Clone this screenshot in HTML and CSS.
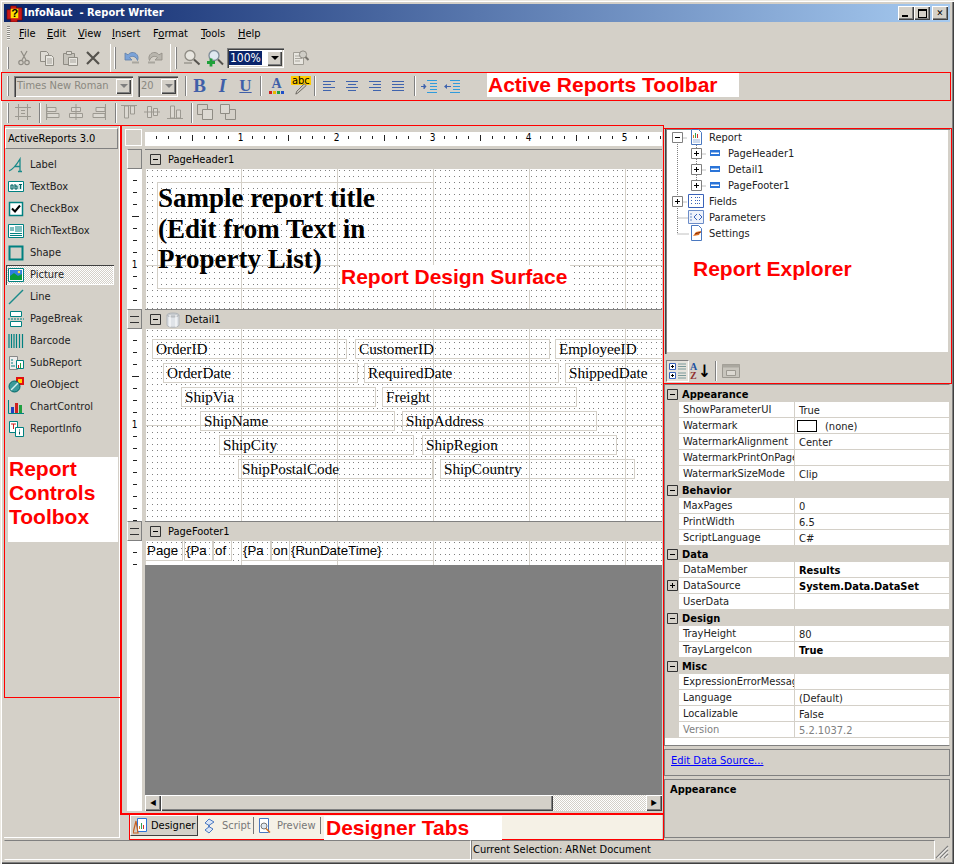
FILE: index.html
```html
<!DOCTYPE html>
<html lang="en">
<head>
<meta charset="utf-8">
<title>InfoNaut - Report Writer</title>
<link rel="stylesheet" href="styles.css">
</head>
<body>
<svg class="defs" xmlns="http://www.w3.org/2000/svg">
  <symbol id="i-cut" viewBox="0 0 16 16"><path d="M5 1l5 9M11 1l-5 9" fill="none" stroke="#8f8c84" stroke-width="1.2"/><circle cx="5" cy="12.5" r="2.2" fill="none" stroke="#8f8c84" stroke-width="1.2"/><circle cx="11" cy="12.5" r="2.2" fill="none" stroke="#8f8c84" stroke-width="1.2"/></symbol>
  <symbol id="i-copy" viewBox="0 0 16 16"><path d="M1.500 1.500h6l2 2v8h-8z" fill="#dedbd4" stroke="#8f8c84"/><path d="M6.500 5.500h6l2 2v8h-8z" fill="#e8e6e0" stroke="#8f8c84"/><path d="M8 9h5M8 11h5M8 13h5" stroke="#a8a59e"/></symbol>
  <symbol id="i-paste" viewBox="0 0 16 16"><path d="M1.500 3.500h11v11h-11z" fill="#c6c3bb" stroke="#8f8c84"/><path d="M4.500 1.500h5v3h-5z" fill="#dedbd4" stroke="#8f8c84"/><path d="M6.500 7.500h9v8h-9z" fill="#e8e6e0" stroke="#8f8c84"/><path d="M8 10h6M8 12h6" stroke="#a8a59e"/></symbol>
  <symbol id="i-del" viewBox="0 0 16 16"><path d="M2 2l12 12M14 2L2 14" stroke="#55534e" stroke-width="2.200" fill="none"/></symbol>
  <symbol id="i-undo" viewBox="0 0 16 16"><path d="M1 3v7h7L5.500 7.500C8 5.500 12 6 13.500 10.500 15.500 6 12 2 8 2.500 6.500 2.700 5 3.500 4 4.800z" fill="#7aa2d8" stroke="#5f7fa8" stroke-width=".8"/><path d="M8 12.500h7" stroke="#a9a69e" stroke-width="2"/></symbol>
  <symbol id="i-redo" viewBox="0 0 16 16"><path d="M15 3v7H8l2.500-2.500C8 5.500 4 6 2.500 10.500 .5 6 4 2 8 2.500c1.500.2 3 1 4 2.300z" fill="#b8b5ad" stroke="#8f8c84" stroke-width=".8"/><path d="M1 12.500h7" stroke="#a9a69e" stroke-width="2"/></symbol>
  <symbol id="i-zoom" viewBox="0 0 18 18"><circle cx="7" cy="6.500" r="5" fill="#e8e6e0" stroke="#8f8c84" stroke-width="1.300"/><path d="M11 10.500l5.500 5" stroke="#55534e" stroke-width="2"/><path d="M1 14h8" stroke="#a9a69e" stroke-width="2"/></symbol>
  <symbol id="i-zoomp" viewBox="0 0 18 18"><circle cx="8" cy="6.500" r="5" fill="#dfe8f0" stroke="#7e8c98" stroke-width="1.300"/><path d="M12 10.500l5 5" stroke="#55534e" stroke-width="2"/><path d="M5 9.500v8M1 13.500h8" stroke="#1fa03a" stroke-width="2.800"/></symbol>
  <symbol id="i-prop" viewBox="0 0 18 18"><path d="M1.500 3.500h10v12h-10z" fill="#e8e6e0" stroke="#a09d95"/><path d="M3 7h7M3 9.500h7M3 12h5" stroke="#a9a69e"/><circle cx="11" cy="5.500" r="3.600" fill="#cfcdc6" stroke="#8f8c84"/><path d="M13.500 8l3 3" stroke="#77746e" stroke-width="2"/></symbol>
  <symbol id="i-al" viewBox="0 0 14 12"><path d="M1 1.500h12M1 4.500h8M1 7.500h12M1 10.500h8" stroke="#3f63ad"/></symbol>
  <symbol id="i-ac" viewBox="0 0 14 12"><path d="M1 1.500h12M3 4.500h8M1 7.500h12M3 10.500h8" stroke="#3f63ad"/></symbol>
  <symbol id="i-ar" viewBox="0 0 14 12"><path d="M1 1.500h12M5 4.500h8M1 7.500h12M5 10.500h8" stroke="#3f63ad"/></symbol>
  <symbol id="i-aj" viewBox="0 0 14 12"><path d="M1 1.500h12M1 4.500h12M1 7.500h12M1 10.500h12" stroke="#3f63ad"/></symbol>
  <symbol id="i-ind" viewBox="0 0 16 14"><path d="M6 1.500h10M9 4.500h7M9 7.500h7M9 10.500h7M6 13.500h10" stroke="#2f9bdc"/><path d="M0 7.500h4M3 5v5" stroke="#3f63ad"/><path d="M5.500 7.500L3 5v5z" fill="#3f63ad"/></symbol>
  <symbol id="i-out" viewBox="0 0 16 14"><path d="M6 1.500h10M9 4.500h7M9 7.500h7M9 10.500h7M6 13.500h10" stroke="#2f9bdc"/><path d="M3 7.500h4" stroke="#3f63ad"/><path d="M0 7.500L3 5v5z" fill="#3f63ad"/></symbol>
  <symbol id="i-pen" viewBox="0 0 16 16"><path d="M5 14l-2 1 1-3 8-8 2 2z" fill="#c8c4bb" stroke="#55534e" stroke-width=".8"/></symbol>
  <symbol id="g-snap" viewBox="0 0 16 16"><path d="M3.500 0v16M12.500 0v16M0 3.500h16M0 12.500h16M6 6.500h4M6 9.500h4" stroke="#9c9991" fill="none"/></symbol>
  <symbol id="g-l" viewBox="0 0 16 16"><path d="M1.500 0v16M2 3.500h9v4H2zM2 9.500h12v4H2z" stroke="#9c9991" fill="#dcd9d2"/></symbol>
  <symbol id="g-c" viewBox="0 0 16 16"><path d="M8 0v16M3.500 3.500h9v4h-9zM1.500 9.500h13v4h-13z" stroke="#9c9991" fill="#dcd9d2"/></symbol>
  <symbol id="g-r" viewBox="0 0 16 16"><path d="M14.500 0v16M5 3.500h9v4H5zM2 9.500h12v4H2z" stroke="#9c9991" fill="#dcd9d2"/></symbol>
  <symbol id="g-t" viewBox="0 0 16 16"><path d="M0 1.500h16M3.500 2h4v12h-4zM9.500 2h4v8h-4z" stroke="#9c9991" fill="#dcd9d2"/></symbol>
  <symbol id="g-m" viewBox="0 0 16 16"><path d="M0 8h16M3.500 2.500h4v11h-4zM9.500 4.500h4v7h-4z" stroke="#9c9991" fill="#dcd9d2"/></symbol>
  <symbol id="g-b" viewBox="0 0 16 16"><path d="M0 14.500h16M3.500 2h4v12h-4zM9.500 6h4v8h-4z" stroke="#9c9991" fill="#dcd9d2"/></symbol>
  <symbol id="g-fr" viewBox="0 0 16 16"><path d="M.5.500h10v10H.500z" fill="none" stroke="#8f8c84"/><path d="M5.500 5.500h10v10h-10z" fill="#dcd9d2" stroke="#8f8c84"/></symbol>
  <symbol id="g-bk" viewBox="0 0 16 16"><path d="M5.500 5.500h10v10h-10z" fill="none" stroke="#8f8c84"/><path d="M.5.500h9v9h-9z" fill="#dcd9d2" stroke="#8f8c84"/></symbol>
  <symbol id="t-label" viewBox="0 0 16 16"><path d="M1 14c5-2 8-7 11-12v12M6.500 9.500h5.500M10 14.500h4" fill="none" stroke="#1a8a8a" stroke-width="1.300"/></symbol>
  <symbol id="t-text" viewBox="0 0 16 16"><path d="M.5 2.500h15v10H.5z" fill="#fff" stroke="#008080"/><path d="M2 5.500h12v5H2z" fill="#008080" opacity=".25"/><path d="M3 6h2v4H3zM7 5v5h2V7H7M11 5.500h3M12.500 5.500V10" fill="none" stroke="#006060"/></symbol>
  <symbol id="t-check" viewBox="0 0 16 16"><path d="M1.500 1.500h13v13h-13z" fill="#fff" stroke="#008080" stroke-width="1.500"/><path d="M4 7.500l3 3 5-6" fill="none" stroke="#000" stroke-width="2"/></symbol>
  <symbol id="t-rich" viewBox="0 0 16 16"><path d="M.5 1.500h15v13H.5z" fill="#fff" stroke="#008080"/><path d="M2 4h4v4H2z" fill="#7fbfbf"/><path d="M7 4h7M7 6h7M7 8h7M2 10.500h12M2 12.500h12" stroke="#008080"/></symbol>
  <symbol id="t-shape" viewBox="0 0 16 16"><path d="M1.500 1.500h13v13h-13z" fill="#d4d0c8" stroke="#008080" stroke-width="2"/></symbol>
  <symbol id="t-pic" viewBox="0 0 16 16"><path d="M.5 1.500h15v13H.5z" fill="#fff" stroke="#008080"/><path d="M2 3h12v6H2z" fill="#2f7fe0"/><path d="M2 9l4-3 4 3 4-2v6H2z" fill="#0a9a3a"/><circle cx="11" cy="5" r="1.300" fill="#ffe040"/></symbol>
  <symbol id="t-line" viewBox="0 0 16 16"><path d="M1 15L15 1" stroke="#1a8a8a" stroke-width="1.500"/></symbol>
  <symbol id="t-break" viewBox="0 0 16 16"><path d="M2.500.5h11v5h-11zM2.500 10.500h11v5h-11z" fill="#fff" stroke="#008080"/><path d="M0 8h16" stroke="#008080" stroke-dasharray="2 1"/></symbol>
  <symbol id="t-bar" viewBox="0 0 16 16"><path d="M1 1v14M3.500 1v14M6 1v14M8.500 1v14M11.500 1v14M14.500 1v14" stroke="#008080" stroke-width="1.200"/></symbol>
  <symbol id="t-sub" viewBox="0 0 16 16"><path d="M1.500 1.500h8v13h-8z" fill="#eee" stroke="#888"/><path d="M3 5h2M3 8h2M3 11h4" stroke="#008080"/><path d="M8.500 5.500h7v8h-7z" fill="#fff" stroke="#008080"/><path d="M10 10h1v3h-1z" fill="#d02020"/><path d="M12 8h1v5h-1z" fill="#20a040"/></symbol>
  <symbol id="t-ole" viewBox="0 0 16 16"><path d="M8 0h8v8H8z" fill="#e01010"/><path d="M10 2h4v4h-4z" fill="#ffd400"/><circle cx="6.500" cy="9.500" r="5.500" fill="#3a9a9a" stroke="#006666"/><path d="M3 13l7-7" stroke="#d4f0f0" stroke-width="1.500"/></symbol>
  <symbol id="t-chart" viewBox="0 0 16 16"><path d="M.5 1v13.500H16" fill="none" stroke="#008080"/><path d="M3 8h3v6H3z" fill="#2040c0"/><path d="M7 4h3v10H7z" fill="#d02020"/><path d="M11 6h3v8h-3z" fill="#20a040"/></symbol>
  <symbol id="t-info" viewBox="0 0 16 16"><path d="M1.500.5h8v11h-8z" fill="#fff" stroke="#008080"/><path d="M3 3h5M5.500 3v5" stroke="#d02020"/><path d="M7.500 6.500h8v9h-8z" fill="#fff" stroke="#008080"/><path d="M11.500 8.500v1M11.500 10.500v3" stroke="#006060"/></symbol>
  <symbol id="x-minus" viewBox="0 0 11 11"><path d="M.5.500h10v10H.500z" fill="#fff" stroke="#808080"/><path d="M3 5.500h5" stroke="#000"/></symbol>
  <symbol id="x-plus" viewBox="0 0 11 11"><path d="M.5.500h10v10H.500z" fill="#fff" stroke="#808080"/><path d="M3 5.500h5M5.500 3v5" stroke="#000"/></symbol>
  <symbol id="x-gminus" viewBox="0 0 11 11"><path d="M.5.500h10v10H.500z" fill="none" stroke="#333"/><path d="M3 5.500h5" stroke="#000"/></symbol>
  <symbol id="x-gplus" viewBox="0 0 11 11"><path d="M.5.500h10v10H.500z" fill="none" stroke="#333"/><path d="M3 5.500h5M5.500 3v5" stroke="#000"/></symbol>
  <symbol id="e-report" viewBox="0 0 16 16"><path d="M3.500.5h7l3 3v12h-10z" fill="#fff" stroke="#4a78c0"/><path d="M5 6h1v3H5z" fill="#e08020"/><path d="M7 4h1v5H7z" fill="#30a050"/><path d="M9 5h1v4H9z" fill="#d03030"/><path d="M5 11h7M5 13h7" stroke="#9ab4dc"/></symbol>
  <symbol id="e-band" viewBox="0 0 16 16"><path d="M3 5h10v6H3z" fill="#2a74d8"/><path d="M4 7.500h8v1.500H4z" fill="#fff"/></symbol>
  <symbol id="e-fields" viewBox="0 0 16 16"><path d="M.5 1.500h15v13H.5z" fill="#fff" stroke="#3a62b8"/><path d="M3 4.500h2M7 4.500h6M3 7.500h2M7 7.500h6M3 10.500h2M7 10.500h6" stroke="#3a62b8" stroke-dasharray="1 1"/></symbol>
  <symbol id="e-param" viewBox="0 0 16 16"><path d="M.5 1.500h15v13H.5z" fill="#eef2fa" stroke="#6b8cc8"/><path d="M3 4v8" stroke="#6b8cc8" stroke-dasharray="2 1"/><path d="M9 5l-3 3 3 3M11 5l3 3-3 3" fill="none" stroke="#3a62b8"/></symbol>
  <symbol id="e-set" viewBox="0 0 16 16"><path d="M3.500.5h7l3 3v12h-10z" fill="#fff" stroke="#4a78c0"/><path d="M5 11l3-4 5-1-2 4z" fill="#e07020"/><path d="M7 9l6-2" stroke="#803010"/></symbol>
  <symbol id="p-cat" viewBox="0 0 18 18"><path d="M.5 1.500h6v6h-6zM.5 10.500h6v6h-6z" fill="#fff" stroke="#3a62b8"/><path d="M2 4.500h3M3.500 3v3M2 13.500h3M3.500 12v3" stroke="#000"/><path d="M9 2h8M9 4.500h8M9 7h8M9 11h8M9 13.500h8M9 16h8" stroke="#7a9a9a"/></symbol>
  <symbol id="p-pages" viewBox="0 0 18 18"><path d="M.5 2.500h17v13H.5z" fill="#c8c5bd" stroke="#9c9991"/><path d="M.5 2.500h17v3H.5z" fill="#aaa79f"/><path d="M4.500 8.500h9v5h-9z" fill="#dcd9d2" stroke="#9c9991"/></symbol>
  <symbol id="d-db" viewBox="0 0 14 16"><path d="M1 3v10c0 3 12 3 12 0V3" fill="#dfe3e8" stroke="#b0b4b8"/><ellipse cx="7" cy="3" rx="6" ry="2" fill="#c8ccd0" stroke="#b0b4b8"/><path d="M4 3v12M10 3v12" stroke="#fff"/></symbol>
  <symbol id="d-des" viewBox="0 0 16 16"><path d="M4.500.5h9v13h-9z" fill="#fff" stroke="#2a74d8"/><path d="M6 8h1v3H6z" fill="#e08020"/><path d="M8 5h1v6H8z" fill="#30a050"/><path d="M10 7h1v4h-1z" fill="#d03030"/><path d="M3 3L0 15h5z" fill="none" stroke="#c86020" stroke-width="1.200"/></symbol>
  <symbol id="d-scr" viewBox="0 0 16 16"><path d="M7 1l5 3-6 4 5 3-4 4-4-3 5-4-5-3z" fill="#dbe6f6" stroke="#4a78c0"/></symbol>
  <symbol id="d-pre" viewBox="0 0 16 16"><path d="M2.500.5h9v14h-9z" fill="#fff" stroke="#4a78c0"/><circle cx="7" cy="8" r="3" fill="#dfe8f0" stroke="#777"/><path d="M9 10.500l4 4" stroke="#d07020" stroke-width="1.500"/></symbol>
  <symbol id="w-grip" viewBox="0 0 14 14"><path d="M13 1L1 13M13 5l-8 8M13 9l-4 4" stroke="#808080" stroke-width="1.200"/><path d="M13 2.500L2.500 13M13 6.500L6.500 13M13 10.500L10.500 13" stroke="#fff"/></symbol>
</svg>

<div class="window">
  <header class="titlebar">
    <svg class="appicon" viewBox="0 0 18 18"><path d="M1 5h4V1h6v2h6v13h-5v2H5v-3H1z" fill="#c81818" stroke="#600" stroke-width=".6"/><path d="M5 4h8v10H5z" fill="#ffe000"/><text x="5.500" y="13" class="appq">?</text></svg>
    <span class="title-text">InfoNaut&nbsp; - Report Writer</span>
    <span class="winbtns">
      <span class="winbtn"><span class="w-min"></span></span>
      <span class="winbtn"><span class="w-max"></span></span>
      <span class="winbtn w-close">✕</span>
    </span>
  </header>

  <nav class="menubar">
    <span class="grip"></span>
    <span class="mi mi-file"><u>F</u>ile</span>
    <span class="mi mi-edit"><u>E</u>dit</span>
    <span class="mi mi-view"><u>V</u>iew</span>
    <span class="mi mi-insert"><u>I</u>nsert</span>
    <span class="mi mi-format">F<u>o</u>rmat</span>
    <span class="mi mi-tools"><u>T</u>ools</span>
    <span class="mi mi-help"><u>H</u>elp</span>
  </nav>

  <div class="tb tb1">
    <div class="tbgroup g1">
      <span class="grip"></span>
      <span class="btn"><svg class="ic"><use href="#i-cut"/></svg></span>
      <span class="btn"><svg class="ic"><use href="#i-copy"/></svg></span>
      <span class="btn"><svg class="ic"><use href="#i-paste"/></svg></span>
      <span class="btn"><svg class="ic"><use href="#i-del"/></svg></span>
    </div>
    <div class="tbgroup g2">
      <span class="grip"></span>
      <span class="btn"><svg class="ic"><use href="#i-undo"/></svg></span>
      <span class="btn"><svg class="ic"><use href="#i-redo"/></svg></span>
    </div>
    <div class="tbgroup g3">
      <span class="grip"></span>
      <span class="btn"><svg class="ic ic18"><use href="#i-zoom"/></svg></span>
      <span class="btn"><svg class="ic ic18"><use href="#i-zoomp"/></svg></span>
      <span class="combo zoomcombo"><span class="sel">100%</span><span class="drop"><i></i></span></span>
      <span class="btn btn-prop"><svg class="ic ic18"><use href="#i-prop"/></svg></span>
    </div>
  </div>

  <div class="tb tb2">
    <span class="grip"></span>
    <span class="combo fontcombo dis"><span class="ctext">Times New Roman</span><span class="drop"><i></i></span></span>
    <span class="combo sizecombo dis"><span class="ctext">20</span><span class="drop"><i></i></span></span>
    <span class="sep s-a"></span>
    <span class="btn t-b">B</span>
    <span class="btn t-i">I</span>
    <span class="btn t-u">U</span>
    <span class="sep s-b"></span>
    <span class="btn colA"><span class="a-letter">A</span><span class="a-sw"><i></i><i></i><i></i><i></i></span></span>
    <span class="btn colH"><span class="abc">abc</span><svg class="pen"><use href="#i-pen"/></svg></span>
    <span class="sep"></span>
    <span class="btn"><svg class="ic14"><use href="#i-al"/></svg></span>
    <span class="btn"><svg class="ic14"><use href="#i-ac"/></svg></span>
    <span class="btn"><svg class="ic14"><use href="#i-ar"/></svg></span>
    <span class="btn"><svg class="ic14"><use href="#i-aj"/></svg></span>
    <span class="sep s-i"></span>
    <span class="btn"><svg class="ic ind"><use href="#i-ind"/></svg></span>
    <span class="btn"><svg class="ic ind"><use href="#i-out"/></svg></span>
  </div>

  <div class="tb tb3">
    <span class="grip"></span>
    <span class="btn"><svg class="ic"><use href="#g-snap"/></svg></span>
    <span class="sep"></span>
    <span class="btn"><svg class="ic"><use href="#g-l"/></svg></span>
    <span class="btn"><svg class="ic"><use href="#g-c"/></svg></span>
    <span class="btn"><svg class="ic"><use href="#g-r"/></svg></span>
    <span class="sep"></span>
    <span class="btn"><svg class="ic"><use href="#g-t"/></svg></span>
    <span class="btn"><svg class="ic"><use href="#g-m"/></svg></span>
    <span class="btn"><svg class="ic"><use href="#g-b"/></svg></span>
    <span class="sep"></span>
    <span class="btn"><svg class="ic"><use href="#g-fr"/></svg></span>
    <span class="btn"><svg class="ic"><use href="#g-bk"/></svg></span>
  </div>

  <main class="main">
    <aside class="toolbox">
      <div class="tbx-head">ActiveReports 3.0</div>
      <div class="tbx-item"><svg class="ic"><use href="#t-label"/></svg>Label</div>
      <div class="tbx-item"><svg class="ic"><use href="#t-text"/></svg>TextBox</div>
      <div class="tbx-item"><svg class="ic"><use href="#t-check"/></svg>CheckBox</div>
      <div class="tbx-item"><svg class="ic"><use href="#t-rich"/></svg>RichTextBox</div>
      <div class="tbx-item"><svg class="ic"><use href="#t-shape"/></svg>Shape</div>
      <div class="tbx-item active"><svg class="ic"><use href="#t-pic"/></svg>Picture</div>
      <div class="tbx-item"><svg class="ic"><use href="#t-line"/></svg>Line</div>
      <div class="tbx-item"><svg class="ic"><use href="#t-break"/></svg>PageBreak</div>
      <div class="tbx-item"><svg class="ic"><use href="#t-bar"/></svg>Barcode</div>
      <div class="tbx-item"><svg class="ic"><use href="#t-sub"/></svg>SubReport</div>
      <div class="tbx-item"><svg class="ic"><use href="#t-ole"/></svg>OleObject</div>
      <div class="tbx-item"><svg class="ic"><use href="#t-chart"/></svg>ChartControl</div>
      <div class="tbx-item"><svg class="ic"><use href="#t-info"/></svg>ReportInfo</div>
    </aside>

    <section class="designer">
      <div class="surface">
        <div class="rulerrow">
          <span class="corner"></span>
          <div class="hruler">
            <span class="hcell"><b>1</b></span><span class="hcell"><b>2</b></span><span class="hcell"><b>3</b></span><span class="hcell"><b>4</b></span><span class="hcell"><b>5</b></span><span class="hcell"></span>
          </div>
        </div>

        <div class="section">
          <div class="vr"><span class="handle"></span><div class="vticks h140"><b>1</b></div></div>
          <div class="secmain">
            <div class="band"><svg class="ex"><use href="#x-gminus"/></svg><span class="bandname">PageHeader1</span></div>
            <div class="body h140">
              <div class="field titlebox">Sample report title<br>(Edit from Text in<br>Property List)</div>
            </div>
          </div>
        </div>

        <div class="section">
          <div class="vr"><span class="handle eq"></span><div class="vticks h192"><b>1</b></div></div>
          <div class="secmain">
            <div class="band"><svg class="ex"><use href="#x-gminus"/></svg><svg class="bandicon"><use href="#d-db"/></svg><span>Detail1</span></div>
            <div class="body h192">
              <div class="field f r1 c1">OrderID</div>
              <div class="field f r1 c2">CustomerID</div>
              <div class="field f r1 c3">EmployeeID</div>
              <div class="field f r2 c4">OrderDate</div>
              <div class="field f r2 c5">RequiredDate</div>
              <div class="field f r2 c6">ShippedDate</div>
              <div class="field f r3 c7">ShipVia</div>
              <div class="field f r3 c8">Freight</div>
              <div class="field f r4 c9">ShipName</div>
              <div class="field f r4 c10">ShipAddress</div>
              <div class="field f r5 c11">ShipCity</div>
              <div class="field f r5 c12">ShipRegion</div>
              <div class="field f r6 c13">ShipPostalCode</div>
              <div class="field f r6 c14">ShipCountry</div>
            </div>
          </div>
        </div>

        <div class="section">
          <div class="vr"><span class="handle eq"></span><div class="vticks h24"></div></div>
          <div class="secmain">
            <div class="band"><svg class="ex"><use href="#x-gminus"/></svg><span class="bandname">PageFooter1</span></div>
            <div class="body h24">
              <div class="field ff p1">Page</div>
              <div class="field ff p2">{Pa</div>
              <div class="field ff p3">of</div>
              <div class="field ff p4">{Pa</div>
              <div class="field ff p5">on</div>
              <div class="field ff p6">{RunDateTime}</div>
            </div>
          </div>
        </div>

        <div class="section">
          <div class="vr vrblank"></div>
          <div class="secmain">
            <div class="empty"></div>
            <div class="hscroll">
              <span class="sbtn">◀</span>
              <span class="thumb"></span>
              <span class="track"></span>
              <span class="sbtn">▶</span>
            </div>
          </div>
        </div>
      </div>

      <div class="tabs">
        <span class="tab on"><svg class="ic"><use href="#d-des"/></svg>Designer</span>
        <span class="tab"><svg class="ic"><use href="#d-scr"/></svg>Script</span>
        <span class="tab"><svg class="ic"><use href="#d-pre"/></svg>Preview</span>
      </div>
    </section>

    <aside class="right">
      <div class="explorer">
        <div class="tree">
          <svg class="treelines" viewBox="0 0 100 110"><path d="M12.500 9v96M12.500 9h10M12.500 73h10M12.500 89h11M12.500 105h11M31.500 14v43M31.500 25h10M31.500 41h10M31.500 57h10" fill="none" stroke="#808080" stroke-dasharray="1 1"/></svg>
          <div class="node n0"><svg class="exp"><use href="#x-minus"/></svg><svg class="ic nic"><use href="#e-report"/></svg>Report</div>
          <div class="node n1"><svg class="exp"><use href="#x-plus"/></svg><svg class="ic nic"><use href="#e-band"/></svg>PageHeader1</div>
          <div class="node n1"><svg class="exp"><use href="#x-plus"/></svg><svg class="ic nic"><use href="#e-band"/></svg>Detail1</div>
          <div class="node n1"><svg class="exp"><use href="#x-plus"/></svg><svg class="ic nic"><use href="#e-band"/></svg>PageFooter1</div>
          <div class="node n0"><svg class="exp"><use href="#x-plus"/></svg><svg class="ic nic"><use href="#e-fields"/></svg>Fields</div>
          <div class="node n0"><span class="exp"></span><svg class="ic nic"><use href="#e-param"/></svg>Parameters</div>
          <div class="node n0"><span class="exp"></span><svg class="ic nic"><use href="#e-set"/></svg>Settings</div>
        </div>
      </div>
      <div class="ptools">
        <span class="pbtn on"><svg class="ic ic18"><use href="#p-cat"/></svg></span>
        <span class="pbtn az"><span class="az-t"><em>A</em><em>Z</em></span><span class="az-arrow">↓</span></span>
        <span class="sep"></span>
        <span class="pbtn"><svg class="ic ic18"><use href="#p-pages"/></svg></span>
      </div>
      <div class="props">
        <div class="rows">
          <div class="cat"><svg class="cx"><use href="#x-gminus"/></svg>Appearance</div>
          <div class="row"><span class="nm">ShowParameterUI</span><span class="vl">True</span></div>
          <div class="row"><span class="nm">Watermark</span><span class="vl"><span class="swatch"></span>(none)</span></div>
          <div class="row"><span class="nm">WatermarkAlignment</span><span class="vl">Center</span></div>
          <div class="row"><span class="nm">WatermarkPrintOnPage</span><span class="vl"></span></div>
          <div class="row"><span class="nm">WatermarkSizeMode</span><span class="vl">Clip</span></div>
          <div class="cat"><svg class="cx"><use href="#x-gminus"/></svg>Behavior</div>
          <div class="row"><span class="nm">MaxPages</span><span class="vl">0</span></div>
          <div class="row"><span class="nm">PrintWidth</span><span class="vl">6.5</span></div>
          <div class="row"><span class="nm">ScriptLanguage</span><span class="vl">C#</span></div>
          <div class="cat"><svg class="cx"><use href="#x-gminus"/></svg>Data</div>
          <div class="row"><span class="nm">DataMember</span><span class="vl strong">Results</span></div>
          <div class="row"><span class="gx"><svg class="cx"><use href="#x-gplus"/></svg></span><span class="nm">DataSource</span><span class="vl strong">System.Data.DataSet</span></div>
          <div class="row"><span class="nm">UserData</span><span class="vl"></span></div>
          <div class="cat"><svg class="cx"><use href="#x-gminus"/></svg>Design</div>
          <div class="row"><span class="nm">TrayHeight</span><span class="vl">80</span></div>
          <div class="row"><span class="nm">TrayLargeIcon</span><span class="vl strong">True</span></div>
          <div class="cat"><svg class="cx"><use href="#x-gminus"/></svg>Misc</div>
          <div class="row"><span class="nm">ExpressionErrorMessag</span><span class="vl"></span></div>
          <div class="row"><span class="nm">Language</span><span class="vl">(Default)</span></div>
          <div class="row"><span class="nm">Localizable</span><span class="vl">False</span></div>
          <div class="row ro"><span class="nm">Version</span><span class="vl">5.2.1037.2</span></div>
        </div>
      </div>
      <div class="cmd"><a class="cmdlink" href="#">Edit Data Source...</a></div>
      <div class="desc">Appearance</div>
    </aside>
  </main>

  <footer class="status">
    <span class="st st1"></span>
    <span class="st st2">Current Selection: ARNet Document</span>
    <svg class="stgrip"><use href="#w-grip"/></svg>
  </footer>

  <div class="box box-toolbar"></div>
  <div class="box box-toolbox"></div>
  <div class="box box-designer"></div>
  <div class="box box-explorer"></div>
  <div class="box box-tabs"></div>
  <div class="anno a-toolbar">Active Reports Toolbar</div>
  <div class="anno a-surface">Report Design Surface</div>
  <div class="anno a-explorer">Report Explorer</div>
  <div class="anno a-toolbox">Report<br>Controls<br>Toolbox</div>
  <div class="anno a-tabs">Designer Tabs</div>
</div>
</body>
</html>
```
FILE: styles.css
```css
* { box-sizing: border-box; }
html, body { margin: 0; padding: 0; background: #d4d0c8; }
body { font: 11px/16px "DejaVu Sans Condensed", "Liberation Sans", Arial, sans-serif; color: #000; }
.defs { position: absolute; width: 0; height: 0; overflow: hidden; }
svg { display: block; flex: none; }

.window {
  position: relative; width: 954px; height: 864px; padding: 4px; overflow: hidden;
  background: #d4d0c8;
  box-shadow: inset 1px 1px 0 #ece9e2, inset 2px 2px 0 #fff, inset -1px -1px 0 #404040, inset -2px -2px 0 #808080;
}

/* title bar */
.titlebar {
  height: 18px; display: flex; align-items: center; padding-left: 2px;
  background: linear-gradient(to right, #0a246a 0%, #a6caf0 100%);
  color: #fff;
}
.appicon { width: 17px; height: 17px; }
.appq { font: bold 12px "Liberation Sans", sans-serif; fill: #000; }
.title-text { margin-left: 1px; font-weight: bold; font-size: 11px; white-space: pre; }
.winbtns { margin-left: auto; display: flex; margin-right: 2px; }
.winbtn {
  width: 16px; height: 14px; background: #d4d0c8; position: relative; display: flex; align-items: center; justify-content: center;
  box-shadow: inset 1px 1px 0 #fff, inset -1px -1px 0 #404040, inset -2px -2px 0 #808080;
  color: #000; font-size: 9px; font-weight: bold; line-height: 14px;
}
.w-close { margin-left: 2px; }
.w-min { width: 6px; height: 2px; background: #000; margin-top: 6px; margin-right: 2px; }
.w-max { width: 9px; height: 9px; border: 1px solid #000; border-top-width: 2px; }

/* menu */
.menubar { height: 22px; display: flex; align-items: center; position: relative; padding-left: 3px; }
.grip { width: 3px; height: 14px; flex: none; background: repeating-linear-gradient(#8c8a84 0 1px, #f4f2ee 1px 2px); }
.mi { position: absolute; top: 4px; }
.mi-file { left: 15px; } .mi-edit { left: 43px; } .mi-view { left: 74px; } .mi-insert { left: 108px; }
.mi-format { left: 149px; } .mi-tools { left: 197px; } .mi-help { left: 234px; }

/* toolbars */
.tb { display: flex; align-items: center; }
.tb1 { height: 28px; }
.tb2 { height: 28px; padding-left: 3px; }
.tb3 { height: 25px; padding-left: 3px; }
.tbgroup { display: flex; align-items: center; height: 100%; padding-left: 3px; }
.tbgroup .grip { height: 22px; width: 2px; background: none; border-left: 1px solid #fff; border-right: 1px solid #808080; margin-right: 2px; }
.tb2 > .grip, .tb3 > .grip { height: 20px; width: 2px; background: none; border-left: 1px solid #fff; border-right: 1px solid #808080; }
.g1 { width: 107px; border-right: 1px solid #fff; }
.g1 .grip { margin-right: 3px; }
.g2 { width: 60px; border-right: 1px solid #fff; }
.g2 .grip { margin-right: 4px; }
.g3 { padding-left: 4px; }
.g3 .grip { margin-right: 3px; }
.btn { width: 23px; height: 22px; flex: none; display: flex; align-items: center; justify-content: center; position: relative; }
.btn-prop { margin-left: 5px; }
.ic { width: 16px; height: 16px; }
.ic18 { width: 18px; height: 18px; }
.ic14 { width: 14px; height: 12px; }
.ind { width: 16px; height: 14px; }
.tb3 > .grip + .btn { margin-left: 2px; }
.tb2 > .btn, .tb3 > .btn { margin-top: -1px; }
.sep { width: 2px; height: 20px; flex: none; border-left: 1px solid #808080; border-right: 1px solid #fff; margin: 0 1px 0 3px; }
.tb3 .sep { margin: 0 0 0 5px; }
.combo {
  display: flex; align-items: center; height: 20px; flex: none; background: #fff; padding: 2px;
  box-shadow: inset 1px 1px 0 #808080, inset 2px 2px 0 #404040, inset -1px -1px 0 #fff, inset -2px -2px 0 #d4d0c8;
}
.combo.dis { background: #d4d0c8; color: #8a8880; }
.zoomcombo { width: 57px; margin-left: 1px; }
.sel { background: #0a246a; color: #fff; line-height: 14px; padding: 0 1px; height: 14px; font-size: 12px; margin-right: auto; }
.fontcombo { width: 119px; margin-left: 5px; height: 21px; }
.sizecombo { width: 40px; margin-left: 5px; height: 21px; }
.ctext { flex: 1; padding-left: 1px; white-space: nowrap; overflow: hidden; }
.drop {
  width: 15px; height: 15px; flex: none; margin-left: auto; background: #d4d0c8; display: flex; align-items: center; justify-content: center;
  box-shadow: inset 1px 1px 0 #fff, inset -1px -1px 0 #404040, inset -2px -2px 0 #808080;
}
.drop i { width: 0; height: 0; border: 4px solid transparent; border-top: 4px solid #000; border-bottom: 0; }
.dis .drop i { border-top-color: #808080; }
.s-a { margin-left: 7px; }
.s-b { margin-right: 3px; }
.s-i { margin-left: 5px; margin-right: 1px; }
.t-b, .t-i, .t-u { color: #3f5fa8; font: bold 19px/22px "Liberation Serif", serif; }
.t-i { font-style: italic; }
.t-u { text-decoration: underline; font-size: 17px; }
.colA { flex-direction: column; }
.a-letter { font: bold 14px/13px "Liberation Serif", serif; color: #3f5fa8; }
.a-sw { display: flex; gap: 1px; margin-top: 1px; }
.a-sw i { width: 3px; height: 3px; background: #d02020; }
.a-sw i:nth-child(2) { background: #e8b800; }
.a-sw i:nth-child(3) { background: #20a040; }
.a-sw i:nth-child(4) { background: #2050c8; }
.abc { position: absolute; top: 1px; left: 3px; background: #ffcc00; font-size: 11px; line-height: 9px; padding: 0 1px; height: 9px; }
.pen { position: absolute; left: 5px; top: 5px; width: 15px; height: 15px; }

/* main area */
.main { display: flex; height: 715px; }
.toolbox { width: 116px; height: 713px; padding-top: 3px; border-right: 1px solid #fff; border-bottom: 1px solid #fff; }
.tbx-head {
  width: 113px; height: 21px; margin: 0 0 5px 1px; padding: 2px 0 0 2px;
  border: 1px solid; border-color: #fff #808080 #808080 #fff;
}
.tbx-item { height: 22px; display: flex; align-items: center; gap: 6px; padding-left: 4px; color: #222; }
.tbx-item.active {
  width: 108px; height: 20px; margin: 1px 0 1px 2px; padding-left: 2px;
  background: repeating-conic-gradient(#fff 0 25%, #d4d0c8 0 50%) 0 0 / 2px 2px;
  box-shadow: inset 1px 1px 0 #404040, inset -1px -1px 0 #fff;
}

.designer { width: 544px; display: flex; flex-direction: column; }
.surface { height: 689px; padding: 4px 2px 0 0; }
.rulerrow { height: 20px; display: flex; padding-left: 5px; }
.corner { width: 17px; height: 17px; background: #d4d0c8; border: 1px solid #fff; }
.hruler { margin: 3px 0 0 3px; height: 14px; flex: 1; display: flex; overflow: hidden; background: #fff; font-size: 10px; }
.hcell {
  width: 96px; flex: none; height: 14px; position: relative; text-align: right;
  background:
    linear-gradient(to right, transparent 47px, #222 47px, #222 48px, transparent 48px) 0 3px / 96px 6px no-repeat,
    linear-gradient(to right, transparent 11px, #222 11px) 0 4px / 12px 3px repeat-x;
}
.hcell b { font-weight: normal; position: absolute; right: -3px; top: -1px; width: 7px; background: #fff; line-height: 14px; text-align: center; font-size: 10px; }

.section { display: flex; }
.vr { width: 15px; margin: 0 3px 0 7px; flex: none; background: #fff; }
.handle {
  display: block; height: 20px; background: #d4d0c8; position: relative;
  border: 1px solid; border-color: #808080 #808080 #808080 #fff;
}
.handle.eq::after { content: ""; position: absolute; left: 2px; right: 2px; top: 6px; height: 5px; border-top: 1px solid #333; border-bottom: 1px solid #333; }
.vticks {
  position: relative; overflow: hidden; text-align: center; font-size: 10px; line-height: 14px;
  background:
    linear-gradient(#222 1px, transparent 1px) 5px 47px / 7px 48px no-repeat,
    linear-gradient(#222 1px, transparent 1px) 6px 11px / 4px 12px repeat-y;
}
.vticks b { display: block; font-weight: normal; background: #fff; margin-top: 89px; }
.h140 { height: 140px; }
.h192 { height: 192px; }
.h24 { height: 24px; }
.vrblank { height: 246px; }
.secmain { flex: 1; min-width: 0; }
.band {
  height: 20px; display: flex; align-items: center; padding-left: 5px; gap: 5px; background: #d4d0c8;
  border-top: 1px solid #808080;
}
.bandname { margin-left: 2px; }
.ex { width: 11px; height: 11px; }
.bandicon { width: 14px; height: 16px; }
.body {
  position: relative; overflow: hidden;
  background:
    linear-gradient(to right, #d4d0c8 1px, transparent 1px) 96px 0 / 96px 100%,
    linear-gradient(#d4d0c8 1px, transparent 1px) 0 96px / 100% 96px no-repeat,
    linear-gradient(transparent 1px, #fff 1px) 0 1px / 100% 6px,
    repeating-linear-gradient(to right, #fff 0 2px, #808080 2px 3px, #fff 3px 4.800px);
}
.field { position: absolute; border: 1px solid #d4d0c8; white-space: nowrap; overflow: hidden; }
.titlebox { left: 12px; top: 13px; width: 277px; height: 107px; font: bold 27px/30.500px "Liberation Serif", serif; }
.f { height: 20px; width: 195px; font: 15.200px/18px "Liberation Serif", serif; padding-left: 3px; }
.r1 { top: 10px; } .r2 { top: 34px; } .r3 { top: 58px; } .r4 { top: 82px; } .r5 { top: 106px; } .r6 { top: 130px; }
.c1 { left: 7px; } .c2 { left: 210px; } .c3 { left: 410px; }
.c4 { left: 18px; } .c5 { left: 219px; } .c6 { left: 420px; }
.c7 { left: 36px; } .c8 { left: 237px; }
.c9 { left: 55px; } .c10 { left: 257px; }
.c11 { left: 74px; } .c12 { left: 277px; }
.c13 { left: 93px; } .c14 { left: 295px; }
.ff { top: -1px; height: 21px; font: 13.330px/20px "Liberation Sans", sans-serif; padding-left: 1px; }
.p1 { left: 0; width: 38px; } .p2 { left: 39px; width: 29px; } .p3 { left: 68px; width: 19px; }
.p4 { left: 96px; width: 30px; } .p5 { left: 126px; width: 19px; } .p6 { left: 144px; width: 145px; }
.empty { height: 230px; background: #808080; }
.hscroll { height: 16px; display: flex; }
.sbtn {
  width: 16px; height: 16px; flex: none; background: #d4d0c8; font-size: 8px; line-height: 16px; text-align: center;
  box-shadow: inset 1px 1px 0 #fff, inset -1px -1px 0 #404040, inset -2px -2px 0 #808080;
}
.thumb { width: 392px; background: #d4d0c8; box-shadow: inset 1px 1px 0 #fff, inset -1px -1px 0 #404040, inset -2px -2px 0 #808080; }
.track { flex: 1; background: repeating-conic-gradient(#fff 0 25%, #d4d0c8 0 50%) 0 0 / 2px 2px; }

.tabs { height: 25px; margin: 1px 2px 0 10px; background: #f5f1e6; display: flex; align-items: flex-start; color: #777; }
.tab { display: flex; align-items: center; gap: 4px; border-right: 1px solid #777; margin-top: 2px; height: 17px; }
.tab.on { color: #000; height: 21px; margin-top: 0; width: 68px; padding: 0 0 0 2px; gap: 2px; background: #d4d0c8; border: 1px solid; border-color: #fff #404040 #404040 #fff; }
.tab:nth-child(2) { margin-left: 4px; width: 52px; }
.tab:nth-child(3) { margin-left: 3px; width: 64px; }

/* right column */
.right { width: 286px; }
.explorer {
  margin: 3px 0 0 1px; width: 285px; height: 226px; background: #fff; position: relative;
  box-shadow: inset 1px 1px 0 #404040, inset 2px 2px 0 #808080, inset -1px -1px 0 #d4d0c8, inset -2px -2px 0 #d4d0c8;
  padding-top: 1px;
}
.tree { position: relative; }
.treelines { position: absolute; left: 0; top: 0; width: 100px; height: 110px; }
.node { height: 16px; display: flex; align-items: center; position: relative; white-space: nowrap; color: #222; padding-top: 2px; }
.exp { width: 11px; height: 11px; flex: none; position: relative; top: -1px; }
.nic { position: relative; top: -1px; }
.n0 { padding-left: 7px; }
.n0 .nic { margin: 0 5px 0 5px; }
.n1 { padding-left: 26px; }
.n1 .nic { margin: 0 5px 0 5px; }
.ptools { height: 29px; margin-left: 1px; display: flex; align-items: center; padding: 4px 0 0 1px; }
.pbtn { width: 23px; height: 22px; display: flex; align-items: center; justify-content: center; }
.pbtn.on { background: #e6e3dc; border: 1px solid; border-color: #808080 #fff #fff #808080; }
.az { gap: 1px; }
.az-t { display: flex; flex-direction: column; font: bold 10px/9px "Liberation Serif", serif; }
.az-t em { font-style: normal; color: #2050a0; }
.az-t em + em { color: #903030; }
.az-arrow { font-size: 17px; font-weight: bold; line-height: 18px; }
.ptools .sep { margin: 0 2px 0 3px; }
.props { margin: 1px 0 0 0; height: 362px; border: 1px solid #808080; border-right: 1px solid #d4d0c8; background: #fff; }
.rows { border-top: 1px solid #d4d0c8; }
.cat { height: 16px; background: #d4d0c8; display: flex; align-items: center; gap: 4px; padding: 2px 0 0 2px; font-weight: bold; }
.cx { width: 11px; height: 11px; flex: none; position: relative; top: -1px; }
.row { height: 16px; padding-left: 14px; display: flex; position: relative; background: #d4d0c8; }
.gx { position: absolute; left: 2px; top: 3px; }
.nm { width: 116px; flex: none; overflow: hidden; white-space: nowrap; padding: 1px 0 0 4px; background: #fff; border-right: 1px solid #d4d0c8; border-bottom: 1px solid #d4d0c8; line-height: 14px; color: #222; }
.vl { flex: 1; padding: 2px 0 0 4px; background: #fff; border-bottom: 1px solid #d4d0c8; display: flex; align-items: center; line-height: 13px; color: #222; }
.strong { font-weight: bold; color: #000; }
.ro .nm, .ro .vl { color: #808080; }
.swatch { width: 20px; height: 12px; background: #fff; border: 1px solid #000; margin: -1px 8px 0 -2px; }
.cmd { height: 27px; margin-top: 3px; border: 1px solid #808080; padding: 3px 0 0 6px; }
.cmdlink { color: #00f; }
.desc { height: 59px; margin-top: 3px; border: 1px solid #808080; padding: 2px 0 0 5px; font-weight: bold; }

/* status bar */
.status { height: 20px; display: flex; position: relative; }
.st { height: 20px; border: 1px solid; border-color: #808080 #fff #fff #808080; }
.st1 { width: 467px; border-left-color: #d4d0c8; }
.st2 { width: 464px; padding: 0 0 0 1px; line-height: 17px; }
.stgrip { width: 14px; height: 14px; position: absolute; right: 1px; bottom: 1px; }

/* red annotations laid over the app */
.box { position: absolute; border: 1px solid #f00; pointer-events: none; }
.box-toolbar { left: 1px; top: 72px; width: 950px; height: 29px; }
.box-toolbox { left: 4px; top: 125px; width: 117px; height: 573px; }
.box-designer { left: 120px; top: 125px; width: 544px; height: 690px; border-left-width: 2px; border-bottom-width: 2px; }
.box-explorer { left: 663px; top: 128px; width: 289px; height: 256px; }
.box-tabs { left: 129px; top: 813px; width: 535px; height: 27px; }
.anno { position: absolute; font: bold 21px/24px "Liberation Sans", sans-serif; color: #f00; background: #fff; white-space: nowrap; }
.a-toolbar { left: 487px; top: 73px; width: 252px; height: 24px; padding-left: 1px; }
.a-surface { left: 340px; top: 265px; width: 230px; height: 25px; padding-left: 1px; }
.a-explorer { left: 693px; top: 257px; background: transparent; }
.a-toolbox { left: 8px; top: 457px; width: 110px; height: 85px; padding: 0 0 0 1px; }
.a-tabs { left: 324px; top: 816px; width: 178px; height: 24px; padding-left: 2px; }
```
